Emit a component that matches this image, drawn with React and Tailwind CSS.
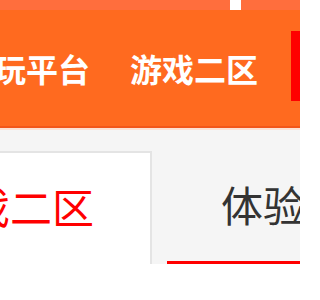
const FONT = { fontFamily: '"Noto Sans CJK SC", "Noto Sans", sans-serif' }

export default function App() {
  return (
    <div className="w-[300px] h-[300px] overflow-hidden bg-white" style={FONT}>
      {/* top strip */}
      <div className="h-[10px] bg-[#ff6e3d] flex">
        <div className="w-[230px]" />
        <div className="w-[11px] bg-white" />
      </div>

      {/* orange nav */}
      <div className="h-[118px] bg-[#ff6a1f] border-b-2 border-[#f2571a] flex items-center">
        <div className="flex items-center ml-[-38px] gap-[40px] text-[32px] font-bold text-white whitespace-nowrap leading-none">
          <span>试玩平台</span>
          <span>游戏二区</span>
        </div>
        <div className="ml-auto w-[9px] h-[70px] bg-[#ff0000] mb-[4px]" />
      </div>
      <div className="h-[2px] bg-[#fde2d4]" />

      {/* tabs */}
      <div className="bg-[#f5f5f5] pt-[21px]">
        <div className="flex h-[113px]">
          <div className="w-[152px] shrink-0 bg-white border-t-2 border-r-2 border-[#e4e4e4] flex items-center justify-end pr-[56px] pb-[6px]">
            <span className="text-[42px] leading-none text-[#ff0000] whitespace-nowrap">游戏二区</span>
          </div>
          <div className="flex-1 flex flex-col pl-[15px]">
            <div className="flex-1 flex items-center pl-[54px] pb-[4px]">
              <span className="text-[42px] leading-none text-[#333333] whitespace-nowrap">体验区</span>
            </div>
            <div className="h-[3px] bg-[#ff0000]" />
          </div>
        </div>
      </div>
    </div>
  )
}
